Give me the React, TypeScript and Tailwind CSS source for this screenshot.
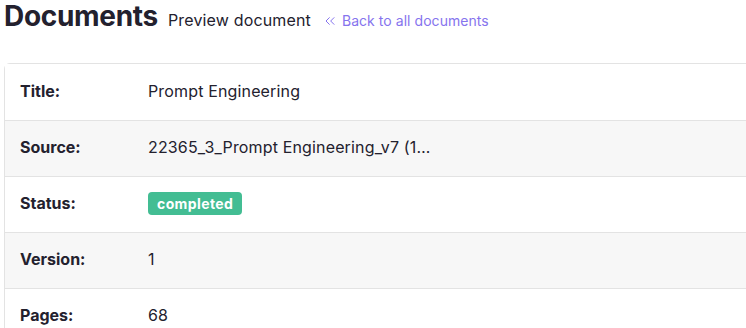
import { ChevronsLeft } from "lucide-react";

const rows: { label: string; value: React.ReactNode }[] = [
  { label: "Title:", value: "Prompt Engineering" },
  { label: "Source:", value: "22365_3_Prompt Engineering_v7 (1…" },
  {
    label: "Status:",
    value: (
      <span className="inline-block rounded-[4px] bg-[#43bd93] px-[9px] py-[2px] text-[14px] font-bold leading-[19px] tracking-[0.4px] text-white">
        completed
      </span>
    ),
  },
  { label: "Version:", value: "1" },
  { label: "Pages:", value: "68" },
];

export default function App() {
  return (
    <div className="h-[328px] w-[746px] overflow-hidden bg-white font-['Inter',sans-serif] text-[#23212e]">
      <div className="flex items-baseline gap-[10px] px-[4px]">
        <h1 className="text-[28px] font-bold leading-[32px] tracking-[-0.3px]">Documents</h1>
        <span className="text-[16px] leading-[24px] tracking-[0.15px]">Preview document</span>
        <a href="#" className="ml-[1px] text-[14px] leading-[20px] tracking-[0.05px] text-[#8674ee]">
          <ChevronsLeft size={16} strokeWidth={1.5} className="mr-[4px] inline-block align-[-3px]" />
          Back to all documents
        </a>
      </div>
      <div className="ml-[4px] mt-[31px] w-[800px] rounded-tl-[6px] border border-[#e3e3e3]">
        {rows.map((r, i) => (
          <div
            key={r.label}
            className={`flex h-[56px] items-center pb-[3px] ${i > 0 ? "border-t border-[#e3e3e3]" : ""} ${
              i % 2 === 1 ? "bg-[#f7f7f7]" : "bg-white"
            }`}
          >
            <div className="w-[143px] pl-[15px] text-[16px] font-bold">{r.label}</div>
            <div className="text-[16px] tracking-[0.15px]">{r.value}</div>
          </div>
        ))}
      </div>
    </div>
  );
}
